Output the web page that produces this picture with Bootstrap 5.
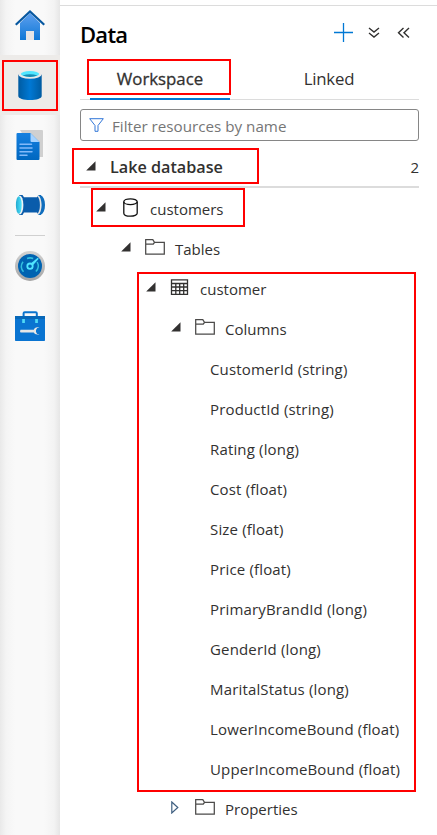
<!DOCTYPE html>
<html lang="en">
<head>
<meta charset="utf-8">
<meta name="viewport" content="width=device-width, initial-scale=1">
<title>Data</title>
<link href="https://cdn.jsdelivr.net/npm/bootstrap@5.3.0/dist/css/bootstrap.min.css" rel="stylesheet">
<style>
body{font-family:"Open Sans","Noto Sans",sans-serif;font-size:15px;color:#323130;background:#fff;width:437px;height:835px;overflow:hidden}
svg{display:block;flex:none}
.rail{width:60px;height:835px;background:linear-gradient(90deg,#e9e9e9 0,#f4f4f4 6px,#f9f9f9 15px,#f9f9f9 44px,#f3f3f3 54px,#e6e6e6 60px)}
.rail-item{height:60px}
.rail-first{height:55px;padding-top:10px}
.rail-on{background:#edebe9}
.rail-sep{width:30px;height:1px;background:#d0d0d0;margin:0 15px}
.pane{width:377px;padding-left:20px;padding-right:18px;padding-top:5px}
.topline{height:1px;background:#dcdcdc;margin:0 -18px 0 -20px}
.head{height:55px}
.head h1{font-size:22px;font-weight:600;color:#000;letter-spacing:-.75px;line-height:30px;padding-top:13px}
.head-tools{width:95px;height:53px}
.tabs{height:39px;border-bottom:1px solid #dcdcdc;font-size:16.8px;line-height:35px}
.tabs a{color:#323130;text-decoration:none;width:140px;text-align:center;height:39px}
.tabs a.on{border-bottom:2px solid #0078d4;margin-left:10px;-webkit-text-stroke:.3px #323130}
.tabs a.off{margin-left:29px;letter-spacing:-.2px}
.filter{height:32px;margin-top:9px;border:1px solid #868686;border-radius:3px;padding:0 8px;color:#767676;font-size:15.200px}
.filter .t{padding-top:3px;margin-left:8px}
.lake{height:47px;border-bottom:2px solid #dcdcdc;font-size:16.200px;font-weight:600;padding:8px 0 0 6px}
.lake .t{margin-left:14px}
.lake .num{font-size:15px;font-weight:400;padding-bottom:1px}
.tree-row{height:40px}
.tree-row .t{padding-top:2px}
.tree-row .up{margin-bottom:2px}
.ind0{padding-left:16px}.ind1{padding-left:41px}.ind2{padding-left:66px}.ind3{padding-left:91px}
.leaf{padding-left:130px;letter-spacing:.16px}
.ico{width:20px;margin:0 10px 2px 14px}
.t{white-space:nowrap;display:inline-block}
.redbox{position:absolute;border:2px solid #f00;pointer-events:none}
.r1{left:2px;top:60px;width:56px;height:51px}
.r2{left:87px;top:59px;width:144px;height:36px}
.r3{left:72px;top:148px;width:187px;height:36px}
.r4{left:91px;top:188px;width:154px;height:39px}
.r5{left:137px;top:272px;width:279px;height:520px}
</style>
<script src="https://cdn.jsdelivr.net/npm/bootstrap@5.3.0/dist/js/bootstrap.bundle.min.js"></script>
</head>
<body class="position-relative">
<svg width="0" height="0" class="position-absolute">
<defs>
<linearGradient id="gh" x1="0" y1="0" x2="0" y2="1"><stop offset="0" stop-color="#5ea0ef"/><stop offset="1" stop-color="#0f78d6"/></linearGradient>
<linearGradient id="gc" x1="0" y1="0" x2="1" y2="0"><stop offset="0" stop-color="#005ba1"/><stop offset=".5" stop-color="#0078d4"/><stop offset="1" stop-color="#005ba1"/></linearGradient>
<linearGradient id="gd" x1="0" y1="0" x2="0" y2="1"><stop offset="0" stop-color="#1580e0"/><stop offset="1" stop-color="#0067c0"/></linearGradient>
<linearGradient id="gg" x1="0" y1="0" x2="0" y2="1"><stop offset="0" stop-color="#d2d2d2"/><stop offset="1" stop-color="#a5a5a5"/></linearGradient>
<linearGradient id="gp" x1="0" y1="0" x2="1" y2="0"><stop offset="0" stop-color="#22a9cf"/><stop offset="1" stop-color="#50e6ff"/></linearGradient>
<symbol id="folder" viewBox="0 0 20 16"><path d="M.7.7h7.1l1.700 2.700h9.800v11.800H.7zM.7 5h7.600l1.300-1.600" fill="none" stroke="#4b4a49" stroke-width="1.250"/></symbol>
<symbol id="open" viewBox="0 0 10 10"><path d="M9.500.3v9.200H.2z" fill="#323130"/></symbol>
</defs>
</svg>
<div class="d-flex">
<nav class="rail d-flex flex-column">
<div class="rail-first d-flex justify-content-center"><svg width="30" height="30" viewBox="0 0 30 30"><path d="M5 13L15 3l10 10v17H5z" fill="url(#gh)"/><path d="M11 21h8v9h-8z" fill="#e6e6e6"/><path d="M15 0l15 14-1.500 1.600L15 3 1.500 15.600 0 14z" fill="#0758a0"/></svg></div>
<div class="rail-item rail-on d-flex align-items-center justify-content-center"><svg width="24" height="30" viewBox="0 0 24 30"><path d="M.3 4.500v21.500C.3 28.500 5.500 30 12 30s11.700-1.500 11.700-4V4.500z" fill="url(#gc)"/><ellipse cx="12" cy="4.500" rx="11.700" ry="4.200" fill="#e8e8e8"/><ellipse cx="12" cy="4" rx="9.200" ry="2.900" fill="#50e6ff"/><path d="M4.500 5.600Q12 2.800 19.500 5.600 12 8.400 4.500 5.600z" fill="#198ab3"/></svg></div>
<div class="rail-item d-flex align-items-center justify-content-center"><svg width="28" height="30" viewBox="0 0 28 30"><path d="M4 0h22q1 0 1 1v26h-6z" fill="#d0d0d0"/><path d="M1.500 3h13l9 9v17q0 1-1 1H1.500q-1 0-1-1V4q0-1 1-1z" fill="url(#gd)"/><path d="M14.500 3v8q0 1 1 1h8z" fill="#a6d3ff"/><path d="M4 14.200h11.500M4 18h12M4 21.700h12M4 25.300h7" stroke="#83b9f9" stroke-width="1.500" stroke-linecap="round"/></svg></div>
<div class="rail-item d-flex align-items-center justify-content-center"><svg width="30" height="20" viewBox="0 0 30 20"><path d="M4 0h3.500l1.500 2.300h13L23.500 0H26v20h-2.500L22 17.500H9L7.500 20H4z" fill="#0a5cab"/><ellipse cx="4.700" cy="10" rx="3.700" ry="9.600" fill="#f2f2f2"/><ellipse cx="3.800" cy="10" rx="2.900" ry="8.700" fill="url(#gp)"/><path d="M22.800 0h2.700C28.600 1.500 30 5 30 10s-1.400 8.500-4.500 10h-2.700c2.500-2.500 3.400-5.600 3.400-10s-.9-7.500-3.400-10z" fill="#0f6dbd"/><path d="M23 .7c2 2 2.700 5.200 2.700 9.300s-.7 7.300-2.700 9.300" fill="none" stroke="#e4e4e4" stroke-width="1.600"/></svg></div>
<div class="rail-sep"></div>
<div class="rail-item d-flex align-items-center justify-content-center"><svg width="30" height="30" viewBox="0 0 30 30"><circle cx="15" cy="15" r="15" fill="url(#gg)"/><circle cx="15" cy="15" r="12" fill="#0063b1"/><path d="M8.500 20.800A8.300 8.300 0 0 1 8 10.700M12 7.500a8.300 8.300 0 0 1 6.200 0M22.200 11a8.300 8.300 0 0 1-1.300 9.500" fill="none" stroke="#32bedd" stroke-width="1.500"/><circle cx="15" cy="15.200" r="2.700" fill="none" stroke="#50e6ff" stroke-width="1.800"/><path d="M16 12.300l6.700-5.500 1 1-5.700 6.500z" fill="#50e6ff"/></svg></div>
<div class="rail-item d-flex align-items-center justify-content-center"><svg width="30" height="30" viewBox="0 0 30 30"><path d="M8.600 6V2.300q0-1.100 1.200-1.100h10.800q1.200 0 1.200 1.100V6" fill="none" stroke="#0b74ce" stroke-width="2"/><rect y="5" width="30" height="25" rx=".8" fill="#0a74d1"/><path d="M0 5h30v3H0z" fill="#0868b8"/><path d="M7.200 8h2.700v4H7.200zM20.200 8h2.700v4h-2.700z" fill="#50d9f5"/><path d="M5.500 18.700h13.300c.7-2 3.200-3.100 5.700-1.700h-2.300l-1.200 2v2l1.200 2h2.300c-2.500 1.400-5 .2-5.700-1.400H5.500q-1-1.500 0-2.900z" fill="#e6e6e6"/></svg></div>
</nav>
<main class="pane">
<div class="topline"></div>
<div class="head d-flex">
<h1 class="m-0 flex-grow-1"><span class="t">Data</span></h1>
<div class="head-tools d-flex align-items-center">
<svg width="96" height="20" viewBox="324 23 96 20"><path d="M343.500 23v19M334 32.500h19" stroke="#0078d4" stroke-width="1.300"/><path d="M369 28l5 4 5-4M369 33l5 4 5-4M403.500 28l-5 4.700 5 4.700M409 28l-5 4.700 5 4.700" fill="none" stroke="#323130" stroke-width="1.400"/></svg>
</div>
</div>
<div class="tabs d-flex"><a href="#" class="on"><span class="t">Workspace</span></a><a href="#" class="off"><span class="t">Linked</span></a></div>
<div class="filter d-flex align-items-center"><svg width="15" height="14" viewBox="0 0 15 14"><path d="M.7.700h13.600L9 7.500v5.800H6V7.500z" fill="none" stroke="#3277d8" stroke-width="1"/></svg><span class="t">Filter resources by name</span></div>
<div class="lake d-flex align-items-center"><svg width="10" height="10" class="mb-1"><use href="#open"/></svg><span class="t">Lake database</span><span class="ms-auto num">2</span></div>
<div class="tree">
<div class="tree-row d-flex align-items-center ind0"><svg width="10" height="10" class="up"><use href="#open"/></svg><div class="ico d-flex justify-content-center"><svg width="15" height="19" viewBox="0 0 15 19"><path d="M.8 3.700v11.500c0 1.800 3 3 6.700 3s6.700-1.200 6.700-3V3.700" fill="none" stroke="#111" stroke-width="1.300"/><ellipse cx="7.500" cy="3.700" rx="6.700" ry="2.900" fill="none" stroke="#111" stroke-width="1.300"/></svg></div><span class="t">customers</span></div>
<div class="tree-row d-flex align-items-center ind1"><svg width="10" height="10" class="up"><use href="#open"/></svg><div class="ico"><svg width="20" height="16"><use href="#folder"/></svg></div><span class="t">Tables</span></div>
<div class="tree-row d-flex align-items-center ind2"><svg width="10" height="10" class="up"><use href="#open"/></svg><div class="ico"><svg width="20" height="16" viewBox="0 0 20 16"><path d="M1.500 .8h16v14.500h-16zM1.500 4.500h16M1.500 8h16M1.500 11.600h16M5.800 4v11M9.700 4v11M13.700 4v11" fill="none" stroke="#323130" stroke-width="1.300"/></svg></div><span class="t">customer</span></div>
<div class="tree-row d-flex align-items-center ind3"><svg width="10" height="10" class="up"><use href="#open"/></svg><div class="ico"><svg width="20" height="16"><use href="#folder"/></svg></div><span class="t">Columns</span></div>
<div class="tree-row d-flex align-items-center leaf"><span class="t">CustomerId (string)</span></div>
<div class="tree-row d-flex align-items-center leaf"><span class="t">ProductId (string)</span></div>
<div class="tree-row d-flex align-items-center leaf"><span class="t">Rating (long)</span></div>
<div class="tree-row d-flex align-items-center leaf"><span class="t">Cost (float)</span></div>
<div class="tree-row d-flex align-items-center leaf"><span class="t">Size (float)</span></div>
<div class="tree-row d-flex align-items-center leaf"><span class="t">Price (float)</span></div>
<div class="tree-row d-flex align-items-center leaf"><span class="t">PrimaryBrandId (long)</span></div>
<div class="tree-row d-flex align-items-center leaf"><span class="t">GenderId (long)</span></div>
<div class="tree-row d-flex align-items-center leaf"><span class="t">MaritalStatus (long)</span></div>
<div class="tree-row d-flex align-items-center leaf"><span class="t">LowerIncomeBound (float)</span></div>
<div class="tree-row d-flex align-items-center leaf"><span class="t">UpperIncomeBound (float)</span></div>
<div class="tree-row d-flex align-items-center ind3"><svg width="10" height="13" viewBox="0 0 10 13" class="up"><path d="M.8 1l6 5.500-6 5.500z" fill="none" stroke="#3f5f80" stroke-width="1.200"/></svg><div class="ico"><svg width="20" height="16"><use href="#folder"/></svg></div><span class="t">Properties</span></div>
</div>
</main>
</div>
<div class="redbox r1"></div><div class="redbox r2"></div><div class="redbox r3"></div><div class="redbox r4"></div><div class="redbox r5"></div>
</body>
</html>
